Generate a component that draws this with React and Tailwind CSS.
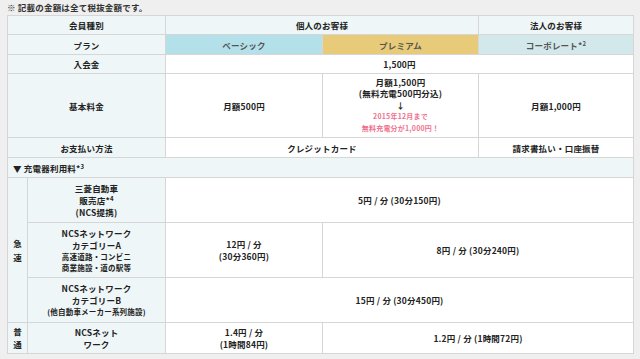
import React from "react";

const th = "border border-[#d6d6d6] bg-[#eef6f7] text-center align-middle p-0";
const td = "border border-[#d6d6d6] bg-white text-center align-middle p-0";

const Sup = ({ children }) => (
  <span>
    *<span className="text-[6px] align-top relative top-[-1px]">{children}</span>
  </span>
);

export default function App() {
  return (
    <div
      className="min-h-[359px] w-[640px] bg-[#efefef] text-[#222] font-bold text-[8.5px] leading-[12px] tracking-[0.2px]"
      style={{ fontFamily: '"Noto Sans CJK JP", "Liberation Sans", sans-serif' }}
    >
      <p className="pl-[7px] pt-[1px] h-[15px] text-[#333]">※ 記載の金額は全て税抜金額です。</p>
      <table className="ml-[7px] w-[626px] table-fixed border-collapse">
        <colgroup>
          <col className="w-[20px]" />
          <col className="w-[138px]" />
          <col className="w-[157px]" />
          <col className="w-[156px]" />
          <col className="w-[155px]" />
        </colgroup>
        <tbody>
          <tr className="h-[19px]">
            <td colSpan={2} className={th}>会員種別</td>
            <td colSpan={2} className={th}>個人のお客様</td>
            <td className={th}>法人のお客様</td>
          </tr>
          <tr className="h-[20px]">
            <td colSpan={2} className={th}>プラン</td>
            <td className={`${th} !bg-[#b4e0ea] text-[#555]`}>ベーシック</td>
            <td className={`${th} !bg-[#e8cb78] text-[#555]`}>プレミアム</td>
            <td className={`${th} !bg-[#d3e8ea] text-[#555]`}>
              コーポレート<Sup>2</Sup>
            </td>
          </tr>
          <tr className="h-[19px]">
            <td colSpan={2} className={th}>入会金</td>
            <td colSpan={3} className={td}>1,500円</td>
          </tr>
          <tr className="h-[64px]">
            <td colSpan={2} className={th}>基本料金</td>
            <td className={td}>月額500円</td>
            <td className={`${td} leading-[11.5px]`}>
              <div>月額1,500円</div>
              <div>(無料充電500円分込)</div>
              <div>↓</div>
              <div className="text-[7px] text-[#f0708f]">2015年12月まで</div>
              <div className="text-[7px] text-[#f0708f]">無料充電分が1,000円！</div>
            </td>
            <td className={td}>月額1,000円</td>
          </tr>
          <tr className="h-[20px]">
            <td colSpan={2} className={th}>お支払い方法</td>
            <td colSpan={2} className={td}>クレジットカード</td>
            <td className={td}>請求書払い・口座振替</td>
          </tr>
          <tr className="h-[20px]">
            <td colSpan={5} className={`${th} text-left pl-[5px]`}>
              ▼ 充電器利用料<Sup>3</Sup>
            </td>
          </tr>
          <tr className="h-[45px]">
            <td rowSpan={3} className={`${th} leading-[14px]`}>
              <div>急</div>
              <div>速</div>
            </td>
            <td className={th}>
              <div>三菱自動車</div>
              <div>
                販売店<Sup>4</Sup>
              </div>
              <div>(NCS提携)</div>
            </td>
            <td colSpan={3} className={td}>5円 / 分 (30分150円)</td>
          </tr>
          <tr className="h-[55px]">
            <td className={th}>
              <div>NCSネットワーク</div>
              <div>カテゴリーA</div>
              <div className="text-[7.5px] leading-[11px]">高速道路・コンビニ</div>
              <div className="text-[7.5px] leading-[11px]">商業施設・道の駅等</div>
            </td>
            <td className={td}>
              <div>12円 / 分</div>
              <div>(30分360円)</div>
            </td>
            <td colSpan={2} className={td}>8円 / 分 (30分240円)</td>
          </tr>
          <tr className="h-[45px]">
            <td className={th}>
              <div>NCSネットワーク</div>
              <div>カテゴリーB</div>
              <div className="text-[7.5px]">(他自動車メーカー系列施設)</div>
            </td>
            <td colSpan={3} className={td}>15円 / 分 (30分450円)</td>
          </tr>
          <tr className="h-[31px]">
            <td className={`${th} leading-[13px]`}>
              <div>普</div>
              <div>通</div>
            </td>
            <td className={th}>
              <div>NCSネット</div>
              <div>ワーク</div>
            </td>
            <td className={td}>
              <div>1.4円 / 分</div>
              <div>(1時間84円)</div>
            </td>
            <td colSpan={2} className={td}>1.2円 / 分 (1時間72円)</td>
          </tr>
        </tbody>
      </table>
    </div>
  );
}
